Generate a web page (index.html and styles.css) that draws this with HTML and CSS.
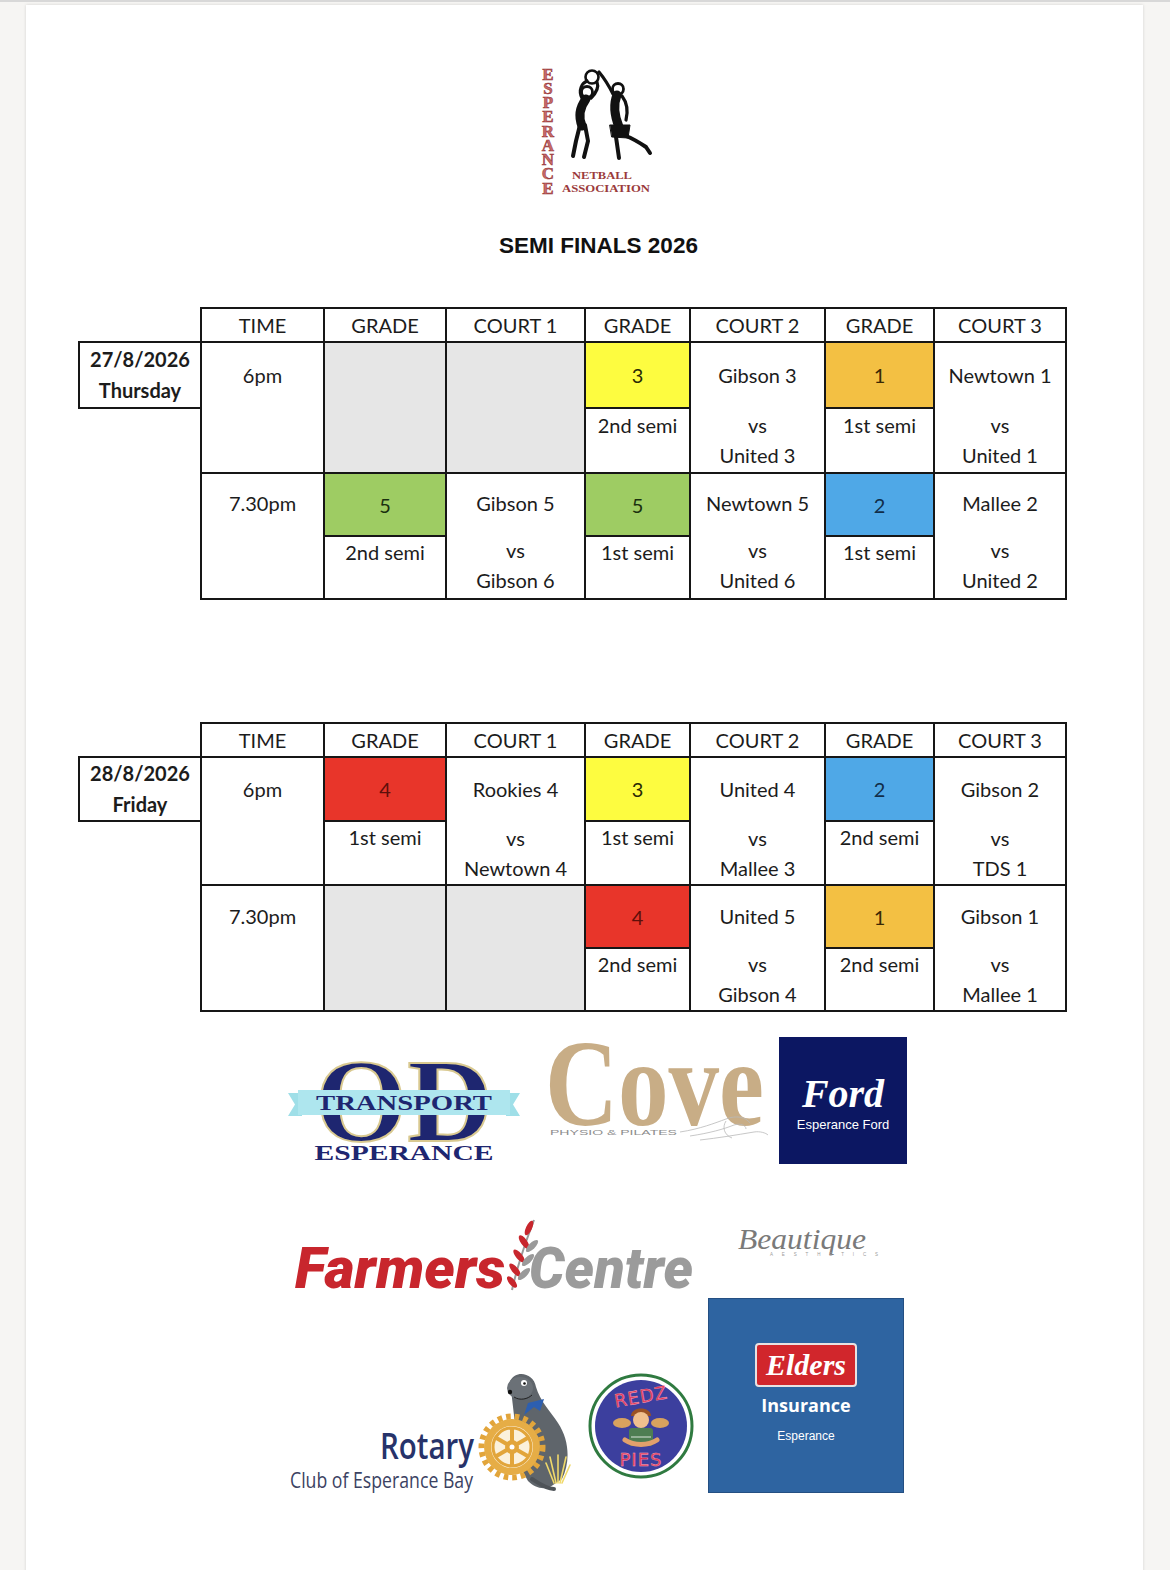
FILE: index.html
```html
<!DOCTYPE html>
<html lang="en">
<head>
<meta charset="utf-8">
<title>Semi Finals 2026</title>
<link rel="stylesheet" href="styles.css">
</head>
<body>
<div class="page">
  <header class="head">
    <svg class="logo" width="120" height="138" viewBox="0 0 120 138">
      <g class="vletters" text-anchor="middle">
        <text x="9" y="18">E</text><text x="9" y="32">S</text><text x="9" y="46">P</text>
        <text x="9" y="60">E</text><text x="9" y="75">R</text><text x="9" y="89">A</text>
        <text x="9" y="103">N</text><text x="9" y="117">C</text><text x="9" y="132">E</text>
      </g>
      <text class="assoc" x="33" y="117" textLength="60" lengthAdjust="spacingAndGlyphs">NETBALL</text>
      <text class="assoc" x="23" y="130" textLength="88" lengthAdjust="spacingAndGlyphs">ASSOCIATION</text>
      <g fill="none" stroke="#111" stroke-linecap="round" stroke-linejoin="round">
        <circle cx="53" cy="15" r="6.5" stroke-width="2.6"/>
        <circle cx="48" cy="30" r="5.5" stroke-width="2.8" fill="#fff"/>
        <path d="M43 36 C39 28 43 21 48 19" stroke-width="3.2"/>
        <path d="M52 36 C57 31 60 25 58 20" stroke-width="3.2"/>
        <path d="M47 37 C41 45 39 54 43 64" stroke-width="9"/>
        <path d="M41 63 L37 79 L34 94" stroke-width="4"/>
        <path d="M46 63 L49 79 L45 95" stroke-width="4"/>
        <circle cx="79" cy="27" r="5.5" stroke-width="2.8" fill="#fff"/>
        <path d="M74 32 C70 24 65 16 60 10" stroke-width="3.2"/>
        <path d="M83 34 C89 42 89 50 87 58" stroke-width="3.2"/>
        <path d="M78 33 C74 43 76 55 80 65" stroke-width="9"/>
        <path d="M71 63 L91 63 L89 76 L73 75 Z" fill="#111" stroke-width="1"/>
        <path d="M77 75 L80 96" stroke-width="4"/>
        <path d="M87 74 C95 77 101 81 107 85 L111 91" stroke-width="4"/>
      </g>
    </svg>
    <h1 class="title">SEMI FINALS 2026</h1>
  </header>

  <table class="sched first">
    <colgroup>
      <col class="c-date"><col class="c-time"><col class="c-grade"><col class="c-court1">
      <col class="c-grade2"><col class="c-court2"><col class="c-grade3"><col class="c-court3">
    </colgroup>
    <tr class="hdr">
      <td class="blank"></td><th>TIME</th><th>GRADE</th><th>COURT 1</th><th>GRADE</th><th>COURT 2</th><th>GRADE</th><th>COURT 3</th>
    </tr>
    <tr class="ra r1">
      <td class="date">27/8/2026<br>Thursday</td>
      <td class="cell" rowspan="2"><div class="l1">6pm</div></td>
      <td class="empty" rowspan="2"></td>
      <td class="empty" rowspan="2"></td>
      <td class="g yellow">3</td>
      <td class="cell" rowspan="2"><div class="l1">Gibson 3</div><div class="ln">vs</div><div class="ln">United 3</div></td>
      <td class="g orange">1</td>
      <td class="cell" rowspan="2"><div class="l1">Newtown 1</div><div class="ln">vs</div><div class="ln">United 1</div></td>
    </tr>
    <tr class="rb r1">
      <td class="blank"></td>
      <td class="semi">2nd semi</td>
      <td class="semi">1st semi</td>
    </tr>
    <tr class="ra r2">
      <td class="blank" rowspan="2"></td>
      <td class="cell" rowspan="2"><div class="l1">7.30pm</div></td>
      <td class="g green">5</td>
      <td class="cell" rowspan="2"><div class="l1">Gibson 5</div><div class="ln">vs</div><div class="ln">Gibson 6</div></td>
      <td class="g green">5</td>
      <td class="cell" rowspan="2"><div class="l1">Newtown 5</div><div class="ln">vs</div><div class="ln">United 6</div></td>
      <td class="g blue">2</td>
      <td class="cell" rowspan="2"><div class="l1">Mallee 2</div><div class="ln">vs</div><div class="ln">United 2</div></td>
    </tr>
    <tr class="rb r2">
      <td class="semi">2nd semi</td>
      <td class="semi">1st semi</td>
      <td class="semi">1st semi</td>
    </tr>
  </table>

  <table class="sched second">
    <colgroup>
      <col class="c-date"><col class="c-time"><col class="c-grade"><col class="c-court1">
      <col class="c-grade2"><col class="c-court2"><col class="c-grade3"><col class="c-court3">
    </colgroup>
    <tr class="hdr">
      <td class="blank"></td><th>TIME</th><th>GRADE</th><th>COURT 1</th><th>GRADE</th><th>COURT 2</th><th>GRADE</th><th>COURT 3</th>
    </tr>
    <tr class="ra r1">
      <td class="date">28/8/2026<br>Friday</td>
      <td class="cell" rowspan="2"><div class="l1">6pm</div></td>
      <td class="g red">4</td>
      <td class="cell" rowspan="2"><div class="l1">Rookies 4</div><div class="ln">vs</div><div class="ln">Newtown 4</div></td>
      <td class="g yellow">3</td>
      <td class="cell" rowspan="2"><div class="l1">United 4</div><div class="ln">vs</div><div class="ln">Mallee 3</div></td>
      <td class="g blue">2</td>
      <td class="cell" rowspan="2"><div class="l1">Gibson 2</div><div class="ln">vs</div><div class="ln">TDS 1</div></td>
    </tr>
    <tr class="rb r1">
      <td class="blank"></td>
      <td class="semi">1st semi</td>
      <td class="semi">1st semi</td>
      <td class="semi">2nd semi</td>
    </tr>
    <tr class="ra r2">
      <td class="blank" rowspan="2"></td>
      <td class="cell" rowspan="2"><div class="l1">7.30pm</div></td>
      <td class="empty" rowspan="2"></td>
      <td class="empty" rowspan="2"></td>
      <td class="g red">4</td>
      <td class="cell" rowspan="2"><div class="l1">United 5</div><div class="ln">vs</div><div class="ln">Gibson 4</div></td>
      <td class="g orange">1</td>
      <td class="cell" rowspan="2"><div class="l1">Gibson 1</div><div class="ln">vs</div><div class="ln">Mallee 1</div></td>
    </tr>
    <tr class="rb r2">
      <td class="semi">2nd semi</td>
      <td class="semi">2nd semi</td>
    </tr>
  </table>

  <section class="sponsors">
    <div class="srow1">
      <svg class="od" width="232" height="156" viewBox="0 -24 232 156">
        <text class="od-big" x="116" y="104" text-anchor="middle" textLength="178" lengthAdjust="spacingAndGlyphs">OD</text>
        <path d="M0 56 L14 56 L14 79 L0 79 L7 67.5 Z M232 56 L218 56 L218 79 L232 79 L225 67.5 Z" fill="#9fdfe8"/>
        <rect x="10" y="53" width="212" height="25" fill="#aee6ee"/>
        <text class="od-rib" x="116" y="73" text-anchor="middle" textLength="176" lengthAdjust="spacingAndGlyphs">TRANSPORT</text>
        <text class="od-esp" x="116" y="123" text-anchor="middle" textLength="179" lengthAdjust="spacingAndGlyphs">ESPERANCE</text>
      </svg>
      <svg class="cove" width="232" height="156" viewBox="0 -24 232 156">
        <text class="cove-big" x="5" y="88" textLength="219" lengthAdjust="spacingAndGlyphs">Cove</text>
        <text class="cove-sub" x="10" y="98" textLength="127" lengthAdjust="spacingAndGlyphs">PHYSIO &amp; PILATES</text>
        <g fill="none" stroke="#b9b9b9" stroke-width="0.8">
          <path d="M140 95 C160 92 175 86 186 82 C196 78 206 80 210 86"/>
          <path d="M150 99 C170 96 184 92 194 88 C200 86 206 88 206 92"/>
          <path d="M160 103 C178 101 196 98 214 95 C220 94 226 96 228 98"/>
          <path d="M186 84 C182 90 184 98 192 101"/>
        </g>
      </svg>
      <div class="ford">
        <span class="ford-script">Ford</span>
        <span class="ford-sub">Esperance Ford</span>
      </div>
    </div>

    <div class="srow2">
      <div class="lcol">
        <svg class="farmers" width="410" height="92" viewBox="0 0 410 92">
          <text class="fc fc-red" x="7" y="72" textLength="210" lengthAdjust="spacingAndGlyphs">Farmers</text>
          <g>
            <path d="M224 74 C228 56 236 30 246 4" fill="none" stroke="#9a9a9a" stroke-width="2"/>
            <ellipse cx="241" cy="12" rx="3" ry="8" transform="rotate(25 241 12)" fill="#c8262d"/>
            <ellipse cx="236" cy="26" rx="3.2" ry="8" transform="rotate(-35 236 26)" fill="#c8262d"/>
            <ellipse cx="244" cy="30" rx="3.2" ry="8" transform="rotate(45 244 30)" fill="#9a9a9a"/>
            <ellipse cx="231" cy="40" rx="3.2" ry="8" transform="rotate(-40 231 40)" fill="#c8262d"/>
            <ellipse cx="240" cy="44" rx="3.2" ry="8" transform="rotate(45 240 44)" fill="#9a9a9a"/>
            <ellipse cx="227" cy="54" rx="3.2" ry="8" transform="rotate(-40 227 54)" fill="#c8262d"/>
            <ellipse cx="236" cy="58" rx="3.2" ry="8" transform="rotate(45 236 58)" fill="#9a9a9a"/>
            <ellipse cx="224" cy="66" rx="3" ry="7" transform="rotate(-40 224 66)" fill="#c8262d"/>
          </g>
          <text class="fc fc-grey" x="241" y="72" textLength="164" lengthAdjust="spacingAndGlyphs">Centre</text>
        </svg>
        <div class="srow3">
          <svg class="rotary" width="284" height="125" viewBox="0 0 284 125">
            <path d="M222 10 C228 -2 246 2 248 16 C252 30 262 40 270 52 C282 70 282 92 274 108 L262 116 C254 119 246 116 240 110 L232 96 Z" fill="#5f656b"/>
            <path d="M244 108 C250 112 258 118 266 118" fill="none" stroke="#4e5358" stroke-width="4" stroke-linecap="round"/>
            <ellipse cx="232" cy="17" rx="13" ry="11" fill="#6b7177"/>
            <circle cx="236" cy="12" r="3" fill="#fff"/><circle cx="236.5" cy="12.5" r="1.3" fill="#111"/>
            <circle cx="222" cy="21" r="2.2" fill="#111"/>
            <path d="M226 26 C232 30 240 28 244 24" fill="none" stroke="#222" stroke-width="1"/>
            <path d="M240 32 L256 28 L252 40 L246 36 L236 44 Z" fill="#2d5fb0"/>
            <g stroke="#f0d96a" stroke-width="1.6" fill="none" stroke-linecap="round">
              <path d="M268 112 L262 86"/><path d="M270 112 L270 84"/><path d="M272 112 L278 86"/>
              <path d="M266 112 L258 92"/><path d="M274 112 L282 94"/>
            </g>
            <g>
              <circle cx="224" cy="76" r="30.5" fill="none" stroke="#e2a53b" stroke-width="6" stroke-dasharray="4.6 4"/>
              <circle cx="224" cy="76" r="28" fill="#e6ad46"/>
              <circle cx="224" cy="76" r="21" fill="#fbf1dc"/>
              <circle cx="224" cy="76" r="19" fill="none" stroke="#e2a53b" stroke-width="3"/>
              <g stroke="#e2a53b" stroke-width="4">
                <path d="M224 57 L224 95"/><path d="M207.5 66.5 L240.5 85.5"/><path d="M207.5 85.5 L240.5 66.5"/>
              </g>
              <circle cx="224" cy="76" r="7" fill="#e2a53b"/>
              <circle cx="224" cy="76" r="2.5" fill="#fff"/>
            </g>
            <text class="rot-big" x="186" y="88" text-anchor="end" textLength="94" lengthAdjust="spacingAndGlyphs">Rotary</text>
            <text class="rot-sub" x="2" y="117" textLength="183" lengthAdjust="spacingAndGlyphs">Club of Esperance Bay</text>
          </svg>
          <svg class="redz" width="106" height="106" viewBox="0 0 106 106">
            <circle cx="53" cy="53" r="51" fill="#fff" stroke="#2f7a40" stroke-width="3"/>
            <circle cx="53" cy="53" r="46" fill="#3c3f9e"/>
            <text class="redz-t" x="53" y="30" text-anchor="middle" transform="rotate(-10 53 24)">REDZ</text>
            <ellipse cx="34" cy="50" rx="9" ry="5" fill="#d8a25e"/>
            <ellipse cx="72" cy="50" rx="9" ry="5" fill="#d8a25e"/>
            <path d="M43 43 C43 33 63 33 63 43 Z" fill="#9a5224"/>
            <circle cx="53" cy="47" r="8" fill="#f0c08e"/>
            <rect x="41" y="55" width="24" height="18" rx="3" fill="#4e7d52"/>
            <path d="M43 64 L63 64" stroke="#fff" stroke-width="0.8"/>
            <path d="M37 67 C46 73 60 73 69 67" fill="none" stroke="#e2a06c" stroke-width="5" stroke-linecap="round"/>
            <text class="redz-t" x="53" y="93" text-anchor="middle">PIES</text>
          </svg>
        </div>
      </div>
      <div class="rcol">
        <svg class="beaut" width="196" height="45" viewBox="0 0 196 45">
          <text class="beaut-t" x="30" y="33" textLength="128" lengthAdjust="spacingAndGlyphs">Beautique</text>
          <text class="beaut-s" x="62" y="40" textLength="108" lengthAdjust="spacing">AESTHETICS</text>
        </svg>
        <div class="elders">
          <div class="elders-badge">Elders</div>
          <div class="elders-ins">Insurance</div>
          <div class="elders-loc">Esperance</div>
        </div>
      </div>
    </div>
  </section>
</div>
</body>
</html>
```

FILE: styles.css
```css
html, body {
  margin: 0;
  padding: 0;
}
body {
  background: #f6f5f3;
  border-top: 2px solid #d8d8d8;
  font-family: Lato, "Liberation Sans", Arial, sans-serif;
  color: #1a1a1a;
}
.page {
  width: 1117px;
  margin: 3px 0 0 26px;
  min-height: 1570px;
  background: #fff;
  box-shadow: 0 0 3px rgba(0, 0, 0, 0.14);
  overflow: hidden;
}

/* header */
.head {
  padding: 57px 0 0 28px;
  text-align: center;
}
.logo {
  display: block;
  margin: 0 auto;
}
.vletters text {
  font-family: "Liberation Serif", serif;
  font-size: 17px;
  font-weight: bold;
  fill: #c86a6a;
  stroke: #8e2b2b;
  stroke-width: 0.5px;
}
.assoc {
  font-family: "Liberation Serif", serif;
  font-size: 10px;
  font-weight: bold;
  fill: #9b3b3b;
}
.title {
  margin: 34px 0 0;
  font: bold 22.5px/24px "Liberation Sans", Arial, sans-serif;
  color: #111;
}

/* schedule tables */
.sched {
  border-collapse: collapse;
  table-layout: fixed;
  width: 987px;
  margin-left: 52px;
  font-size: 20px;
}
.sched.first { margin-top: 49px; }
.sched.second { margin-top: 122px; }
.c-date { width: 122px; }
.c-time { width: 123px; }
.c-grade { width: 122px; }
.c-court1 { width: 139px; }
.c-grade2 { width: 105px; }
.c-court2 { width: 135px; }
.c-grade3 { width: 109px; }
.c-court3 { width: 132px; }

.sched td, .sched th {
  border: 2px solid #161616;
  padding: 0;
  text-align: center;
  vertical-align: top;
  font-weight: normal;
  line-height: 30px;
  color: #1c1c1c;
}
.sched td.blank {
  border: none;
}
.sched .hdr th {
  height: 32px;
  vertical-align: middle;
  line-height: 32px;
}
.first tr.ra.r1 > td { height: 64px; }
.first tr.rb.r1 > td { height: 62px; }
.first tr.ra.r2 > td, .first tr.rb.r2 > td { height: 61px; }
.second tr.ra.r1 > td { height: 61px; }
.second tr.rb.r1 > td { height: 62px; }
.second tr.ra.r2 > td, .second tr.rb.r2 > td { height: 61px; }

.sched td.date {
  font-weight: bold;
  line-height: 31px;
  vertical-align: middle;
}
.first .r1 .cell .l1 { height: 63px; line-height: 63px; margin-top: 1px; }
.first .r2 .cell .l1 { height: 58px; line-height: 58px; }
.second .r1 .cell .l1 { height: 62px; line-height: 62px; }
.second .r2 .cell .l1 { height: 60px; line-height: 60px; }
.cell .l1 + .ln {
  padding-top: 3px;
}
.first .r1 td.semi {
  padding-top: 1px;
}
.sched td.empty {
  background: #e6e6e6;
}
.sched td.g {
  vertical-align: middle;
}
.g.yellow { background: #fdfc40; color: #2a2a05; }
.g.orange { background: #f3c043; color: #3a2905; }
.g.green { background: #9ecc63; color: #1a300f; }
.g.blue { background: #4fa8e7; color: #112d49; }
.g.red { background: #e8352a; color: #5e0f0a; }

/* sponsors */
.sponsors {
  padding-left: 262px;
  margin-top: 1px;
}
.srow1 {
  display: flex;
  align-items: flex-start;
}
.od { display: block; }
.cove { display: block; margin-left: 20px; }
.od-big {
  font-family: "Liberation Serif", serif;
  font-weight: bold;
  font-size: 118px;
  fill: #1e2670;
  stroke: #d9c990;
  stroke-width: 2px;
}
.od-rib, .od-esp {
  font-family: "Liberation Serif", serif;
  font-weight: bold;
  font-size: 21px;
  fill: #1e2670;
}
.cove-big {
  font-family: "Liberation Serif", serif;
  font-weight: bold;
  font-size: 122px;
  fill: #c8ad86;
}
.cove-sub {
  font-family: "Liberation Sans", sans-serif;
  font-size: 7.5px;
  fill: #8d8d8d;
}
.ford {
  width: 128px;
  height: 127px;
  margin: 24px 0 0 7px;
  background: #0c1762;
  color: #fff;
  display: flex;
  flex-direction: column;
  align-items: center;
  justify-content: center;
  padding-top: 6px;
  box-sizing: border-box;
}
.ford-script {
  font-family: "Liberation Serif", serif;
  font-style: italic;
  font-weight: bold;
  font-size: 40px;
  line-height: 40px;
}
.ford-sub {
  font-family: "Liberation Sans", Arial, sans-serif;
  font-size: 13px;
  line-height: 18px;
  margin-top: 2px;
}

.srow2 {
  display: flex;
  margin-top: 47px;
}
.lcol {
  width: 410px;
}
.farmers { display: block; }
.fc {
  font-family: Roboto, "Liberation Sans", sans-serif;
  font-weight: 900;
  font-style: italic;
  font-size: 58px;
}
.fc-red { fill: #c8262d; }
.fc-grey { fill: #9b9b9b; }
.srow3 {
  display: flex;
  align-items: flex-start;
  margin-top: 63px;
}
.rotary { display: block; }
.rot-big {
  font-family: "Open Sans", "Liberation Sans", sans-serif;
  font-weight: 600;
  font-size: 36px;
  fill: #27336a;
}
.rot-sub {
  font-family: "Open Sans", "Liberation Sans", sans-serif;
  font-size: 21px;
  fill: #3b4262;
}
.redz {
  display: block;
  margin-left: 16px;
  margin-top: 2px;
}
.redz-t {
  font-family: "DejaVu Sans", sans-serif;
  font-size: 18px;
  fill: #e43457;
  stroke: #f7a9b8;
  stroke-width: 0.4px;
  letter-spacing: 1px;
}
.rcol {
  width: 196px;
  margin-left: 10px;
}
.beaut { display: block; }
.beaut-t {
  font-family: "Liberation Serif", serif;
  font-style: italic;
  font-size: 30px;
  fill: #7a7a7a;
}
.beaut-s {
  font-family: "Liberation Sans", sans-serif;
  font-size: 4.5px;
  fill: #9a9a9a;
}
.elders {
  margin-top: 37px;
  width: 196px;
  height: 195px;
  background: #2e64a1;
  border: 1px solid #244f82;
  box-sizing: border-box;
  color: #fff;
  display: flex;
  flex-direction: column;
  align-items: center;
  padding-top: 44px;
}
.elders-badge {
  width: 102px;
  height: 44px;
  box-sizing: border-box;
  background: #d1262c;
  border: 2px solid #e8e2e2;
  border-radius: 4px;
  font-family: "Liberation Serif", serif;
  font-style: italic;
  font-weight: bold;
  font-size: 30px;
  line-height: 40px;
  text-align: center;
}
.elders-ins {
  margin-top: 6px;
  font-family: "Open Sans", "Liberation Sans", sans-serif;
  font-weight: bold;
  font-size: 18px;
  line-height: 24px;
}
.elders-loc {
  margin-top: 11px;
  font-family: "Liberation Sans", Arial, sans-serif;
  font-size: 12px;
  line-height: 16px;
}
```
